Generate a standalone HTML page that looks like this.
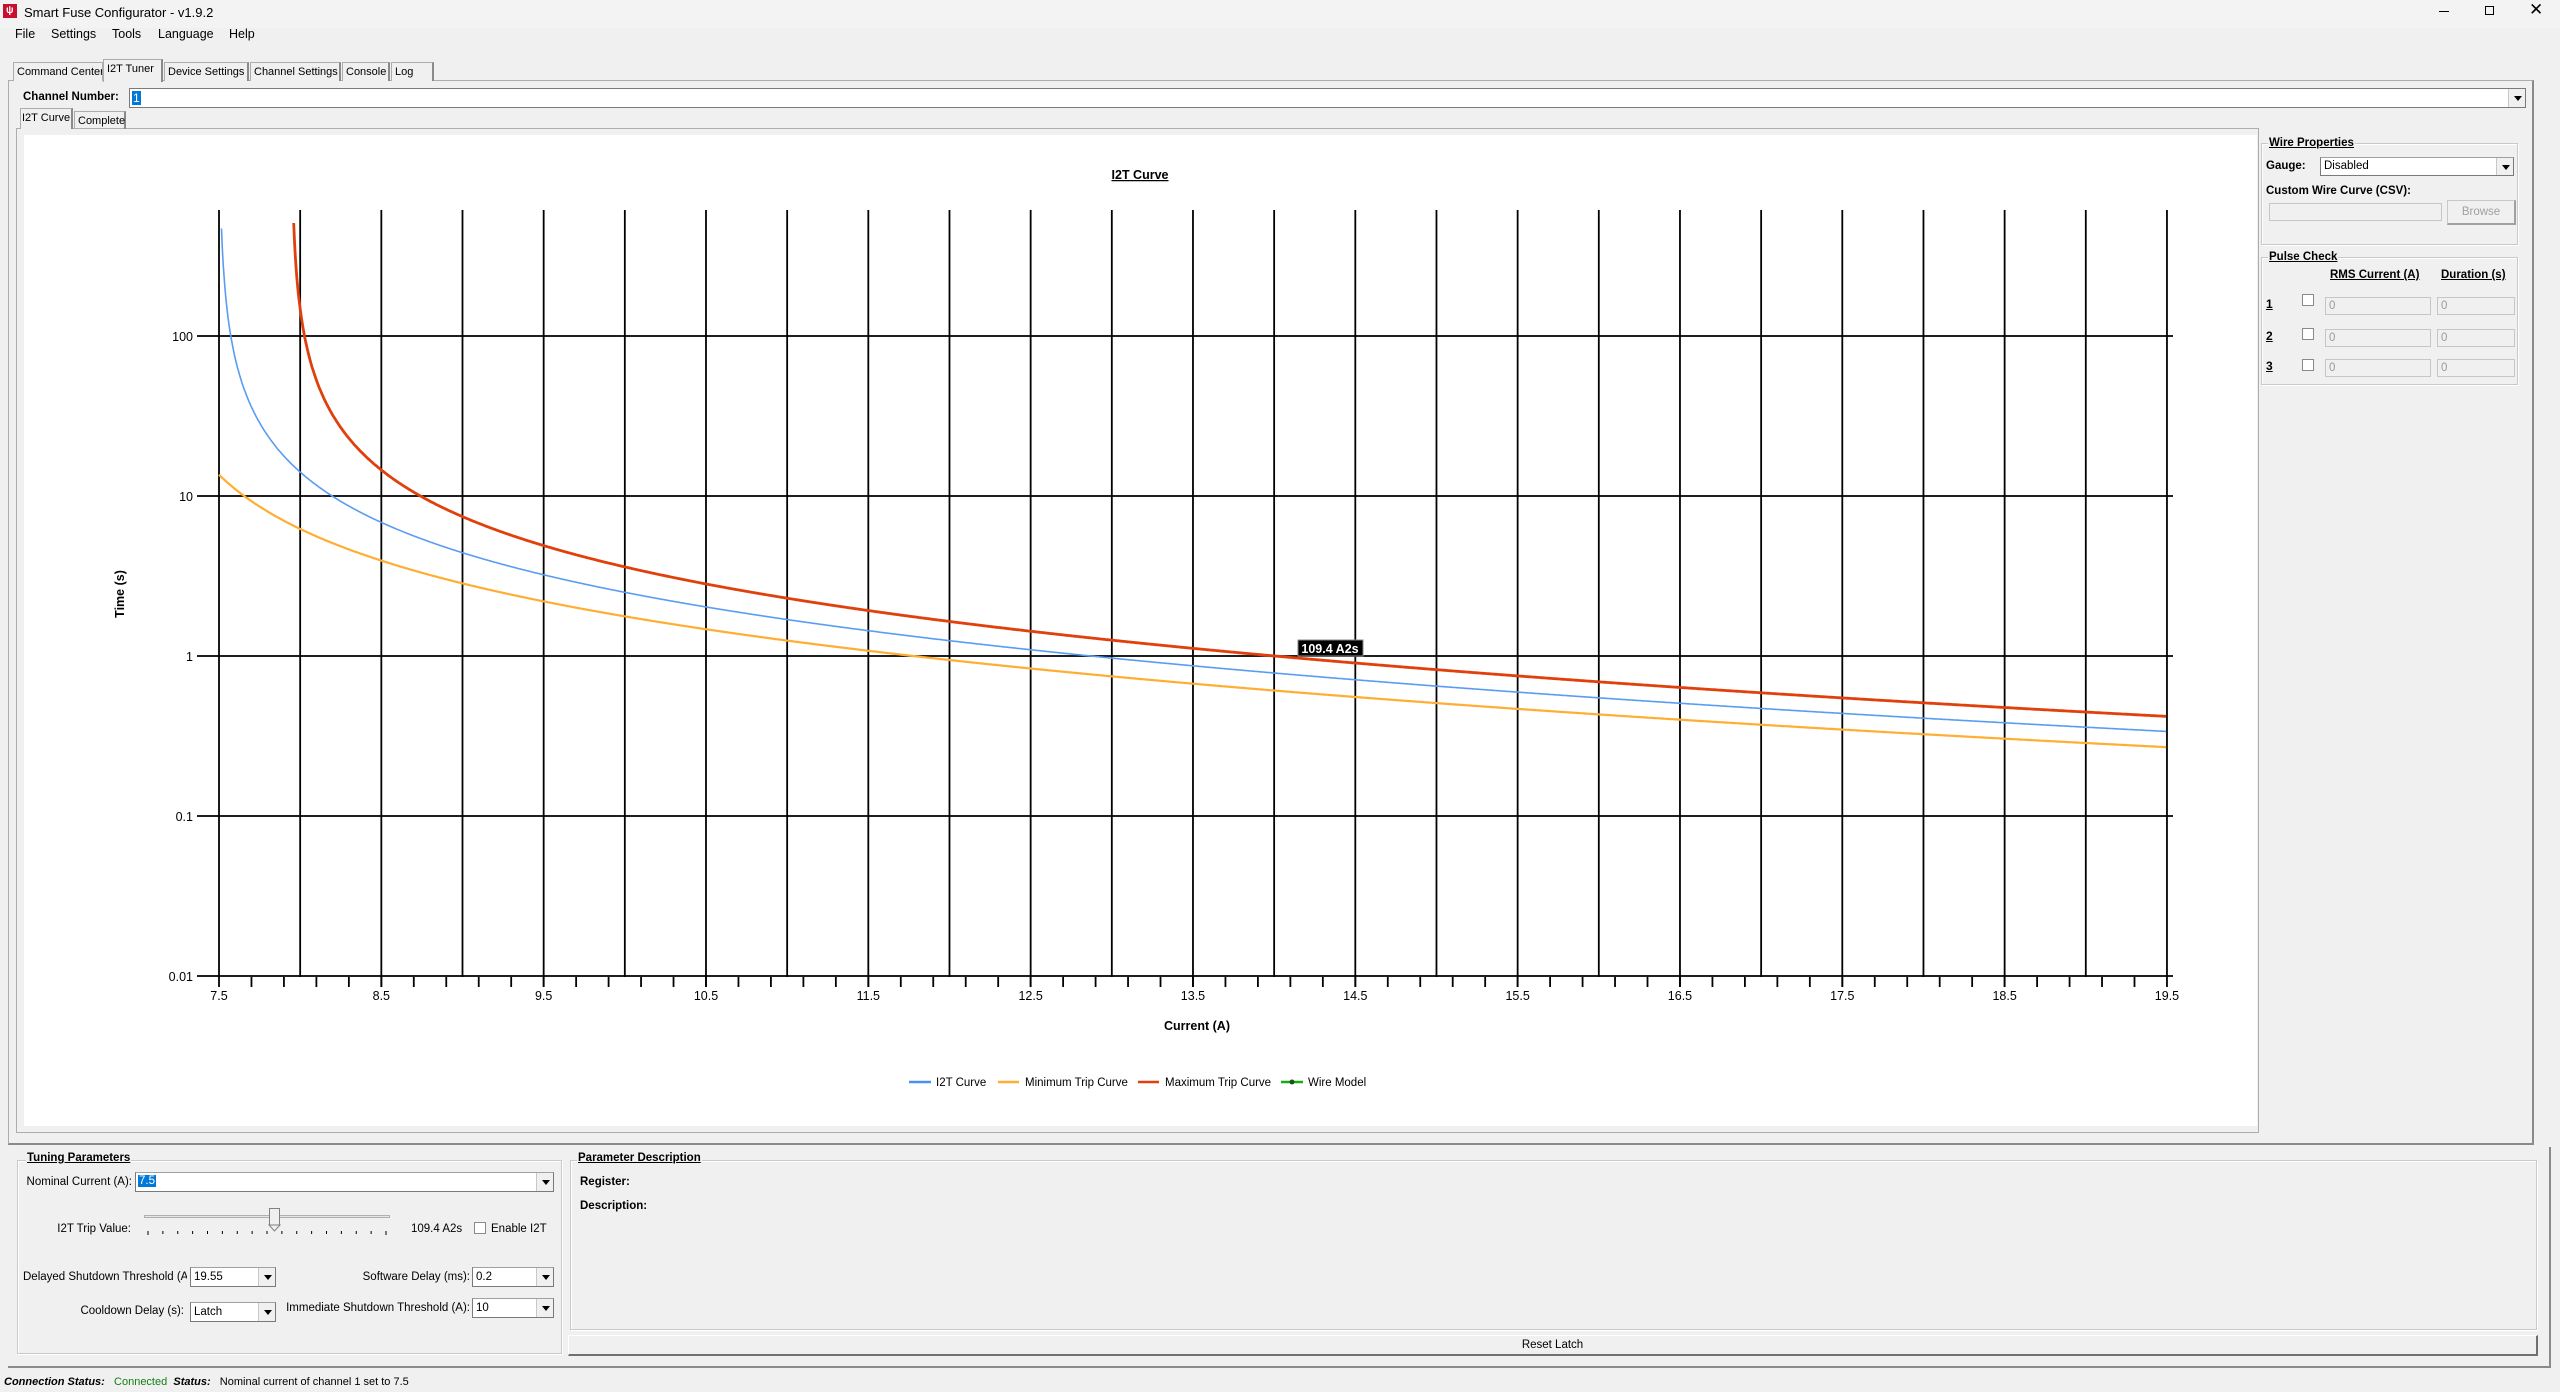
<!DOCTYPE html>
<html><head><meta charset="utf-8">
<style>
*{box-sizing:border-box;margin:0;padding:0}
body{width:2560px;height:1392px;background:#f0f0f0;font-family:"Liberation Sans",Arial,sans-serif;font-size:12px;color:#000;position:relative;overflow:hidden}
.a{position:absolute;white-space:nowrap}
.b{font-weight:bold}
.u{text-decoration:underline}
.combo{position:absolute;background:#fff;border:1px solid #7a7a7a;border-top-color:#a0a0a0;height:20px}
.combo .v{position:absolute;left:3px;top:3px;font-size:11.5px}
.combo .arr{position:absolute;right:0;top:0;width:17px;height:18px;background:#f0f0f0;border-left:1px solid #c8c8c8}
.combo .arr:after{content:"";position:absolute;left:5px;top:7px;border-left:4px solid transparent;border-right:4px solid transparent;border-top:5px solid #000}
.grp{position:absolute;border:1px solid #c9c9c9;box-shadow:inset 1px 1px 0 #fff,1px 1px 0 #fff}
.tab{position:absolute;top:62px;height:19px;border:1px solid #adadad;border-bottom:none;background:#f0f0f0;padding:3px 0 0 3px;font-size:11px;white-space:nowrap;overflow:hidden}
.dis{position:absolute;background:#f0f0f0;border:1px solid #c6c6c6;height:18px;color:#9a9a9a;font-size:11.5px;padding:2px 0 0 3px}
.cb{position:absolute;width:12px;height:12px;border:1px solid #8a8a8a;background:#fff}
.r{text-align:right}
.bp{font-size:11.5px}
</style></head><body>
<!-- title bar -->
<div class="a" style="left:0;top:0;width:2560px;height:28px;background:#f3f3f3"></div>
<div class="a" style="left:3px;top:4px;width:14px;height:14px;background:#c8102e"></div>
<div class="a" style="left:6px;top:5px;color:#fff;font-size:10px;font-weight:bold">ψ</div>
<div class="a" style="left:24px;top:5px;font-size:13px">Smart Fuse Configurator - v1.9.2</div>
<div class="a" style="left:2439px;top:11px;width:10px;height:1px;background:#000"></div>
<div class="a" style="left:2485px;top:6px;width:9px;height:9px;border:1px solid #000"></div>
<div class="a" style="left:2529px;top:0px;font-size:17px">✕</div>
<!-- menu -->
<div class="a" style="left:15px;top:27px;font-size:12.5px">File</div>
<div class="a" style="left:51px;top:27px;font-size:12.5px">Settings</div>
<div class="a" style="left:112px;top:27px;font-size:12.5px">Tools</div>
<div class="a" style="left:158px;top:27px;font-size:12.5px">Language</div>
<div class="a" style="left:229px;top:27px;font-size:12.5px">Help</div>
<!-- main tab frame -->
<div class="a" style="left:8px;top:80px;width:2526px;height:1065px;border:1px solid #adadad;border-right:2px solid #8a8a8a;border-bottom:2px solid #8a8a8a;background:#f0f0f0"></div>
<div class="tab" style="left:13px;width:90px">Command Center</div>
<div class="tab" style="left:103px;top:59px;height:23px;width:60px;border-right:2px solid #8a8a8a">I2T Tuner</div>
<div class="tab" style="left:164px;width:85px;border-right:2px solid #8a8a8a">Device Settings</div>
<div class="tab" style="left:250px;width:91px;border-right:2px solid #8a8a8a">Channel Settings</div>
<div class="tab" style="left:342px;width:48px;border-right:2px solid #8a8a8a">Console</div>
<div class="tab" style="left:391px;width:43px;border-right:2px solid #8a8a8a">Log</div>
<!-- channel number -->
<div class="a b" style="left:23px;top:91px;font-size:11.5px">Channel Number:</div>
<div class="combo" style="left:129px;top:88px;width:2397px;height:20px;border-color:#7a7a7a"><div class="a" style="left:2px;top:2px;background:#0078d7;color:#fff;padding:0 1px">1</div><div class="arr"></div></div>
<!-- sub tabs -->
<div class="a" style="left:16px;top:128px;width:2243px;height:1005px;border:1px solid #adadad;background:#f0f0f0"></div>
<div class="a" style="left:20px;top:108px;width:53px;height:21px;border:1px solid #adadad;border-bottom:none;border-right:2px solid #8a8a8a;background:#f0f0f0"></div>
<div class="a" style="left:22px;top:112px;font-size:11px">I2T Curve</div>
<div class="a" style="left:74px;top:111px;width:52px;height:18px;border:1px solid #adadad;border-bottom:none;border-right:2px solid #8a8a8a"></div>
<div class="a" style="left:78px;top:115px;font-size:11px">Complete</div>
<!-- chart -->
<div class="a" style="left:24px;top:135px;width:2233px;height:991px;background:#fff"></div>
<svg class="a" style="left:0;top:0" width="2560" height="1392" id="ch">
<g id="grid" stroke="#000" stroke-width="1.8"></g>
<g id="curves" fill="none"></g>
<g font-family="Liberation Sans,Arial,sans-serif" font-size="12.5" fill="#000">
<text x="193" y="341" text-anchor="end">100</text>
<text x="193" y="501" text-anchor="end">10</text>
<text x="193" y="661" text-anchor="end">1</text>
<text x="193" y="821" text-anchor="end">0.1</text>
<text x="193" y="981" text-anchor="end">0.01</text>
<g id="xl" text-anchor="middle"></g>
<text x="1140" y="179" text-anchor="middle" font-weight="bold" text-decoration="underline">I2T Curve</text>
<text x="1197" y="1030" text-anchor="middle" font-weight="bold">Current (A)</text>
<text transform="translate(124,594) rotate(-90)" text-anchor="middle" font-weight="bold">Time (s)</text>
</g>
<g font-family="Liberation Sans,Arial,sans-serif" font-size="11.5" fill="#000">
<line x1="909" y1="1082" x2="931" y2="1082" stroke="#4a90f0" stroke-width="2.5"/><text x="936" y="1086">I2T Curve</text>
<line x1="998" y1="1082" x2="1019" y2="1082" stroke="#ffad33" stroke-width="2.5"/><text x="1025" y="1086">Minimum Trip Curve</text>
<line x1="1138" y1="1082" x2="1159" y2="1082" stroke="#e0400c" stroke-width="2.5"/><text x="1165" y="1086">Maximum Trip Curve</text>
<line x1="1281" y1="1082" x2="1303" y2="1082" stroke="#10b010" stroke-width="2.5"/><circle cx="1292" cy="1082" r="2.5" fill="#205020"/><text x="1308" y="1086">Wire Model</text>
</g>
<rect x="1298" y="640" width="65" height="16" fill="#000" stroke="#888" stroke-width="1"/>
<text x="1330" y="653" text-anchor="middle" font-family="Liberation Sans,Arial,sans-serif" font-size="12.5" font-weight="bold" fill="#fff">109.4 A2s</text>
</svg>
<!-- right panel -->
<div class="grp" style="left:2261px;top:143px;width:257px;height:102px"></div>
<div class="a b u" style="left:2268px;top:137px;background:#f0f0f0;padding:0 1px;font-size:11.5px">Wire Properties</div>
<div class="a b" style="left:2266px;top:160px;font-size:11.5px">Gauge:</div>
<div class="combo" style="left:2320px;top:157px;width:194px;height:19px"><div class="v" style="top:2px">Disabled</div><div class="arr" style="height:17px"></div></div>
<div class="a b" style="left:2266px;top:185px;font-size:11.5px">Custom Wire Curve (CSV):</div>
<div class="dis" style="left:2269px;top:203px;width:173px"></div>
<div class="a" style="left:2447px;top:200px;width:69px;height:25px;border:1px solid #c8c8c8;border-right:2px solid #a0a0a0;border-bottom:2px solid #a0a0a0;color:#a0a0a0;text-align:center;padding-top:5px;font-size:11.5px">Browse</div>
<div class="grp" style="left:2261px;top:257px;width:257px;height:128px"></div>
<div class="a b u" style="left:2268px;top:251px;background:#f0f0f0;padding:0 1px;font-size:11.5px">Pulse Check</div>
<div class="a b u" style="left:2330px;top:269px;font-size:11.5px">RMS Current (A)</div>
<div class="a b u" style="left:2441px;top:269px;font-size:11.5px">Duration (s)</div>
<div class="a b u" style="left:2266px;top:297px">1</div>
<div class="a b u" style="left:2266px;top:329px">2</div>
<div class="a b u" style="left:2266px;top:359px">3</div>
<div class="cb" style="left:2302px;top:294px"></div>
<div class="cb" style="left:2302px;top:328px"></div>
<div class="cb" style="left:2302px;top:359px"></div>
<div class="dis" style="left:2325px;top:297px;width:106px">0</div>
<div class="dis" style="left:2437px;top:297px;width:78px">0</div>
<div class="dis" style="left:2325px;top:329px;width:106px">0</div>
<div class="dis" style="left:2437px;top:329px;width:78px">0</div>
<div class="dis" style="left:2325px;top:359px;width:106px">0</div>
<div class="dis" style="left:2437px;top:359px;width:78px">0</div>
<!-- bottom -->
<div class="a" style="left:8px;top:1147px;width:2543px;height:221px;border-right:2px solid #8a8a8a;border-bottom:2px solid #8a8a8a"></div>
<div class="grp" style="left:17px;top:1160px;width:545px;height:194px"></div>
<div class="a b u" style="left:26px;top:1152px;background:#f0f0f0;padding:0 1px;font-size:11.5px">Tuning Parameters</div>
<div class="a bp r" style="left:20px;top:1176px;width:112px">Nominal Current (A):</div>
<div class="combo" style="left:135px;top:1172px;width:419px"><div class="a" style="left:2px;top:2px;background:#0078d7;color:#fff;padding:0 1px;font-size:11.5px">7.5</div><div class="arr"></div></div>
<div class="a bp r" style="left:40px;top:1223px;width:91px">I2T Trip Value:</div>
<div class="a" style="left:144px;top:1215px;width:246px;height:3px;border:1px solid #b0b0b0;background:#e6e6e6"></div>
<div class="a" style="left:269px;top:1208px;width:11px;height:17px;background:#f0f0f0;border:1px solid #808080;border-bottom:none"></div>
<svg class="a" style="left:0;top:0" width="600" height="1392"><polygon points="269,1225 280,1225 274.5,1231" fill="#f0f0f0" stroke="#808080"/><g id="st" stroke="#000"></g></svg>
<div class="a bp" style="left:411px;top:1223px">109.4 A2s</div>
<div class="cb" style="left:474px;top:1222px"></div>
<div class="a bp" style="left:491px;top:1223px">Enable I2T</div>
<div class="a bp" style="left:23px;top:1271px;width:164px;overflow:hidden">Delayed Shutdown Threshold (A)</div>
<div class="combo" style="left:190px;top:1267px;width:86px"><div class="v">19.55</div><div class="arr"></div></div>
<div class="a bp r" style="left:340px;top:1271px;width:130px">Software Delay (ms):</div>
<div class="combo" style="left:472px;top:1267px;width:82px"><div class="v">0.2</div><div class="arr"></div></div>
<div class="a bp r" style="left:60px;top:1305px;width:124px">Cooldown Delay (s):</div>
<div class="combo" style="left:190px;top:1302px;width:86px"><div class="v">Latch</div><div class="arr"></div></div>
<div class="a bp r" style="left:280px;top:1302px;width:190px">Immediate Shutdown Threshold (A):</div>
<div class="combo" style="left:472px;top:1298px;width:82px"><div class="v">10</div><div class="arr"></div></div>
<div class="grp" style="left:570px;top:1160px;width:1967px;height:170px"></div>
<div class="a b u" style="left:577px;top:1152px;background:#f0f0f0;padding:0 1px;font-size:11.5px">Parameter Description</div>
<div class="a b" style="left:580px;top:1176px;font-size:11.5px">Register:</div>
<div class="a b" style="left:580px;top:1200px;font-size:11.5px">Description:</div>
<div class="a" style="left:568px;top:1335px;width:1970px;height:21px;border:1px solid #fff;border-right:2px solid #707070;border-bottom:2px solid #707070;text-align:center;padding-top:3px;font-size:11.5px">Reset Latch</div>
<!-- status -->
<div class="a" style="left:4px;top:1376px;font-size:11px"><b><i>Connection Status:</i></b>&nbsp;&nbsp; <span style="color:#108010">Connected</span>&nbsp; <b><i>Status:</i></b>&nbsp;&nbsp; Nominal current of channel 1 set to 7.5</div>
<script>
(function(){
var NS="http://www.w3.org/2000/svg";
function X(I){return 219+(I-7.5)*162.33;}
function Y(t){return 656-160*Math.log10(t);}
var g=document.getElementById('grid'),xl=document.getElementById('xl');
function ln(p,x1,y1,x2,y2){var l=document.createElementNS(NS,'line');l.setAttribute('x1',x1);l.setAttribute('y1',y1);l.setAttribute('x2',x2);l.setAttribute('y2',y2);p.appendChild(l);}
for(var k=0;k<=24;k++){var I=7.5+k*0.5,x=X(I);ln(g,x,210,x,977);if(k%2==0){ln(g,x,977,x,987);var t=document.createElementNS(NS,'text');t.setAttribute('x',x);t.setAttribute('y',1000);t.textContent=(Math.round(I*10)/10).toString();xl.appendChild(t);}}
for(var k=1;k<60;k++){var I=7.5+k*0.2;if(I>19.51)break;ln(g,X(I),977,X(I),987);}
[336,496,656,816,976].forEach(function(y){ln(g,197,y,2173,y);});
var c=document.getElementById('curves');
function curve(f,I0,col,w){var d='',first=true;for(var I=I0;I<=19.5;I+=0.005){var t=f(I);if(!(t>0))continue;var y=Y(t);if(y<210)continue;d+=(first?'M':'L')+X(I).toFixed(1)+','+y.toFixed(1);first=false;}var p=document.createElementNS(NS,'path');p.setAttribute('d',d);p.setAttribute('stroke',col);p.setAttribute('stroke-width',w);c.appendChild(p);}
curve(function(I){return 89/(I*I-49.7);},7.5,'#ffad33',2.2);
curve(function(I){return 109.4/(I*I-56.25);},7.5005,'#5a9cf2',1.6);
curve(function(I){var a=I*I-63.1;return a>0?133/a:-1;},7.95,'#e0400c',2.8);
var st=document.getElementById('st');
for(var k=0;k<17;k++){var x=148+k*(238/16);ln(st,x,1231,x,1234+(k==0||k==16?1:0));}
})();
</script>
</body></html>
